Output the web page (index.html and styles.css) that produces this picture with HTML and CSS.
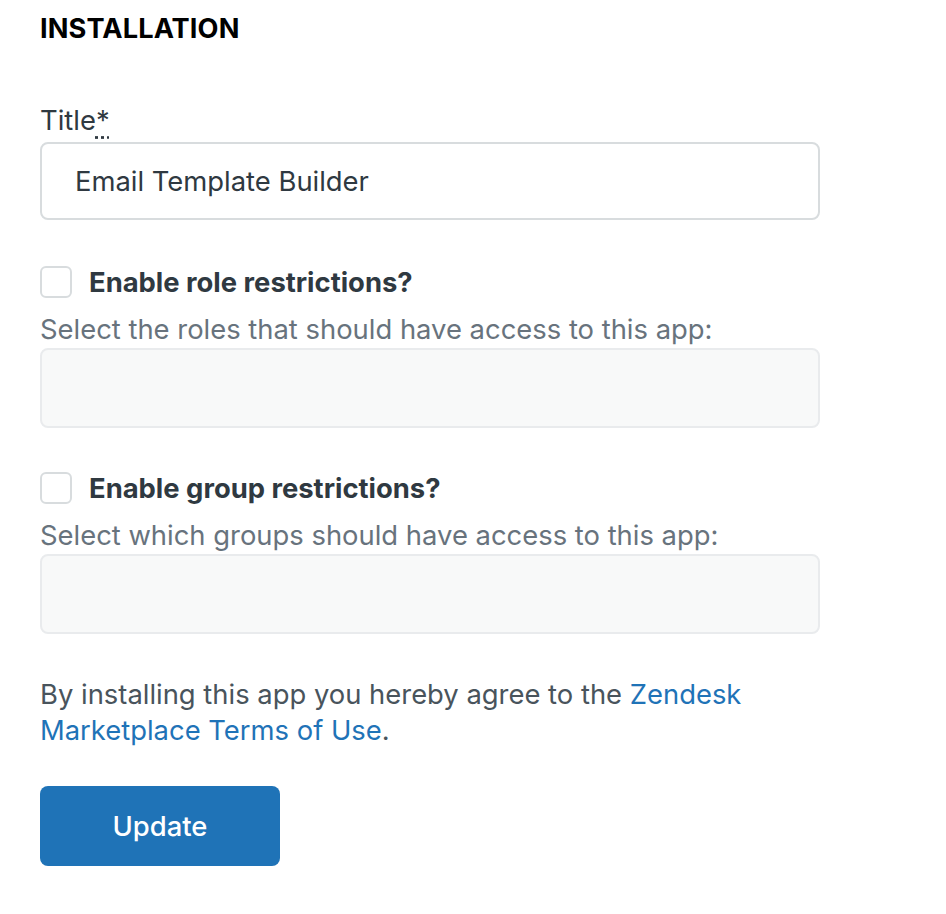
FILE: index.html
```html
<!DOCTYPE html>
<html>
<head>
<meta charset="utf-8">
<link rel="stylesheet" href="styles.css">
</head>
<body>
<div class="page">
  <h2 class="heading">INSTALLATION</h2>
  <div class="field">
    <label class="label">Title<abbr class="req" title="required">*</abbr></label>
    <div class="input">Email Template Builder</div>
  </div>
  <div class="field check-field">
    <div class="check-row"><span class="checkbox"></span><span class="check-label">Enable role restrictions?</span></div>
    <div class="hint">Select the roles that should have access to this app:</div>
    <div class="multi"></div>
  </div>
  <div class="field check-field">
    <div class="check-row"><span class="checkbox"></span><span class="check-label">Enable group restrictions?</span></div>
    <div class="hint">Select which groups should have access to this app:</div>
    <div class="multi"></div>
  </div>
  <p class="terms">By installing this app you hereby agree to the <a href="#">Zendesk</a><br><a href="#">Marketplace Terms of Use</a>.</p>
  <button class="btn">Update</button>
</div>
</body>
</html>
```
FILE: styles.css
```css
* { box-sizing: border-box; }
html, body { margin: 0; padding: 0; background: #fff; }
body { font-family: Inter, "Noto Sans", sans-serif; color: #2f3941; }
.page { width: 780px; margin-left: 40px; padding-top: 12px; display: flex; flex-direction: column; }
.heading { margin: 0; font-size: 27.2px; font-weight: 700; color: #000; line-height: 34px; letter-spacing: 0.1px; }
.field { display: flex; flex-direction: column; }
.label { font-size: 27.4px; line-height: 40px; margin-top: 54px; color: #2f3941; }
.req { text-decoration: underline dotted; text-underline-offset: 6px; }
.input { margin-top: 2px; height: 78px; border: 2px solid #d8dcde; border-radius: 8px; padding: 0 33px; font-size: 27.4px; display: flex; align-items: center; color: #2f3941; }
.check-field { margin-top: 46px; }
.check-field + .check-field { margin-top: 44px; }
.check-row { display: flex; align-items: center; gap: 17px; height: 32px; }
.checkbox { width: 32px; height: 32px; border: 2px solid #d8dcde; border-radius: 6px; flex: none; }
.check-label { font-size: 27.4px; font-weight: 700; color: #2f3941; }
.hint { font-size: 27.4px; color: #68737d; line-height: 38px; margin-top: 12px; }
.multi { height: 80px; border: 2px solid #e9ebed; border-radius: 8px; background: #f8f9f9; }
.terms { margin: 42px 0 0; font-size: 27.4px; line-height: 36px; color: #49545c; }
.terms a { color: #1f73b7; text-decoration: none; }
.btn { margin-top: 38px; width: 240px; height: 80px; background: #1f73b7; border: none; border-radius: 8px; color: #fff; font-family: inherit; font-size: 27.4px; font-weight: 500; }
```
